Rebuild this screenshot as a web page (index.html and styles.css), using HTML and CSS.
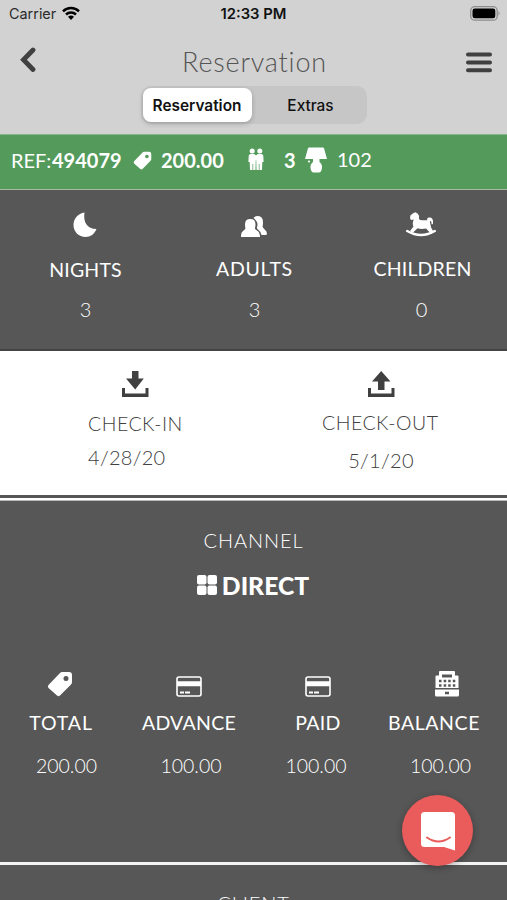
FILE: index.html
```html
<!DOCTYPE html>
<html lang="en">

<head>
    <meta charset="UTF-8">
    <meta name="viewport" content="width=device-width, initial-scale=1.0">
    <title>Reservation</title>
    <link rel="stylesheet" href="styles.css">
</head>

<body>
    <svg width="0" height="0" class="symbols">
        <symbol id="tag" viewBox="0 0 26 26">
            <path fill-rule="evenodd" d="M15 1h7q3 0 3 3v7q0 1.500-1 2.500L13 24.500q-1.500 1.300-3 0L1.500 17q-1.300-1.500 0-3L13 2q1-1 2-1zM19 5a2.500 2.500 0 1 0 0 5a2.500 2.500 0 1 0 0-5z" />
        </symbol>
        <symbol id="card" viewBox="0 0 26 21">
            <rect x="1" y="1" width="24" height="19" rx="2" fill="none" stroke="currentColor" stroke-width="1.600" />
            <path d="M1 5.300h24v5H1zM4 15.500h4v2H4zM9 15.500h5v2H9z" />
        </symbol>
    </svg>

    <header>
        <div class="status-bar">
            <div class="carrier">Carrier
                <svg class="wifi" viewBox="0 0 18 14">
                    <g fill="none" stroke="#000" stroke-width="2.500">
                        <path d="M1 5.300a11.500 11.500 0 0 1 16 0" />
                        <path d="M4 8.500a7.200 7.200 0 0 1 10 0" />
                    </g>
                    <path d="M6 10.700q3-2.500 6 0L9 14z" />
                </svg>
            </div>
            <div class="time">12:33 PM</div>
            <svg class="battery" viewBox="0 0 31 15">
                <rect x=".7" y=".7" width="26.500" height="13.500" rx="4" fill="none" stroke="#8d8d8d" stroke-width="1.300" />
                <rect x="2.500" y="2.500" width="22.800" height="9.800" rx="2.300" />
                <path d="M28.500 5q2.200 2.300 0 4.700z" fill="#8d8d8d" />
            </svg>
        </div>
        <div class="nav">
            <svg class="back" viewBox="0 0 16 26">
                <path d="M13 3L3.500 12.800L13 22.500" fill="none" stroke="#404040" stroke-width="4.800" stroke-linecap="round" />
            </svg>
            <h1>Reservation</h1>
            <svg class="menu" viewBox="0 0 26 21">
                <path d="M2 2.500h22M2 10.500h22M2 18.300h22" stroke="#404040" stroke-width="4" stroke-linecap="round" />
            </svg>
        </div>
        <div class="tabs">
            <div class="tab active">Reservation</div>
            <div class="tab">Extras</div>
        </div>
    </header>

    <div class="ref-bar">
        <span class="ref">REF:</span><b class="ref-number">494079</b>
        <svg class="small-tag"><use href="#tag" /></svg>
        <b class="price">200.00</b>
        <svg class="people" viewBox="0 0 18 23">
            <circle cx="5.200" cy="3" r="2.500" />
            <circle cx="12.800" cy="3" r="2.500" />
            <path d="M3.500 6h3.700L9 7.500L10.800 6h3.700q1.800.3 1.800 2l.3 6h-1.300l-.3 8h-2.500v-6h-.7v6h-2.300l-.3-10h-.4l-.3 10H6.200v-6h-.7v6H3l-.3-8H1.400l.3-6q0-1.700 1.800-2z" />
        </svg>
        <b class="guests">3</b>
        <svg class="lamp" viewBox="0 0 22 26">
            <path d="M4 .5h14q.8 0 1 .8L22 12H0L3 1.300q.2-.8 1-.8zM8 11.500h6.500v3.500q3 2.500 2.500 6q-.8 4.500-3 4.500H8.500q-2.200 0-3-4.500q-.5-3.500 2.500-6z" />
            <circle cx="4" cy="14.500" r="1.100" />
        </svg>
        <span class="room">102</span>
    </div>

    <section class="stay">
        <div class="item nights">
            <svg class="moon" viewBox="0 0 24 25">
                <path d="M11.500 .5C10 10 14 17 23.500 17C21.500 22 17.500 25 12.500 25C6 25 .5 20 .5 13C.5 6.500 5 1.500 11.500 .5z" />
            </svg>
            <div class="label">NIGHTS</div>
            <div class="value">3</div>
        </div>
        <div class="item adults">
            <svg class="group" viewBox="0 0 26 21">
                <path d="M12.500 2q1.500-2 4.500-2q5 .5 5 6q0 3-.5 4.500q.5 1.500 2.200 3q2.300 1.500 2.300 4.500q-.2 1-1.500 1h-4q-.5-3.200-3.500-5.500q-1.500-1-1-2.300q2-5.200-3.500-9.200z" />
                <path d="M9.300 3q5.200 0 5.200 5.300q0 2.500-.7 4q.3 1.200 2.500 2.500q2.700 1.700 2.700 6.200H0q-.2-4.500 2-6q2.400-1.500 2.500-2.700Q4 11 4 8.300q0-5.300 5.300-5.300z" />
            </svg>
            <div class="label">ADULTS</div>
            <div class="value">3</div>
        </div>
        <div class="item children">
            <svg class="horse" viewBox="0 0 30 25">
                <path d="M4 6l.5-2.700L7.500 1l2-.8l2.300 1.600q2 2 1.200 5.200q1 1.500 4 1.200h4.200q-.5-3 2.300-2.700q4 0 3.500 5.500q0 2-1.500 1q.2-3.500-1.300-3q-.7.5.3 3.500l.6 3l2.500 4.500l-2.500 2l-5-5.500q-5 1-8.500-.2L6.500 21L4 19l3.500-4.500Q6 12 7.700 7.500L5 8z" />
                <path d="M1.200 19q13.800 8 27.600 0" fill="none" stroke="currentColor" stroke-width="2.400" stroke-linecap="round" />
            </svg>
            <div class="label">CHILDREN</div>
            <div class="value">0</div>
        </div>
    </section>

    <section class="dates">
        <div class="date check-in">
            <svg viewBox="0 0 28 26">
                <path d="M11 0h6.500v7.500h5.300L14.200 18.500L5 7.500h6zM1 17h3v5.500h20.500V17h3v9H1z" />
            </svg>
            <div class="date-label">CHECK-IN</div>
            <div class="day">4/28/20</div>
        </div>
        <div class="date check-out">
            <svg viewBox="0 0 28 26">
                <path d="M14.200 0L23.500 10.500h-6V19H11v-8.500H5zM1 17h3v5.500h20.500V17h3v9H1z" />
            </svg>
            <div class="date-label">CHECK-OUT</div>
            <div class="day">5/1/20</div>
        </div>
    </section>

    <section class="channel">
        <div class="channel-title">CHANNEL</div>
        <div class="direct">
            <svg viewBox="0 0 20 20">
                <rect width="9.500" height="9.500" rx="2" />
                <rect x="10.500" width="9.500" height="9.500" rx="2" />
                <rect y="10.500" width="9.500" height="9.500" rx="2" />
                <rect x="10.500" y="10.500" width="9.500" height="9.500" rx="2" />
            </svg>
            <b>DIRECT</b>
        </div>
        <div class="payments">
            <div class="payment total">
                <svg><use href="#tag" /></svg>
                <div class="label">TOTAL</div>
                <div class="amount">200.00</div>
            </div>
            <div class="payment advance">
                <svg><use href="#card" /></svg>
                <div class="label">ADVANCE</div>
                <div class="amount">100.00</div>
            </div>
            <div class="payment paid">
                <svg><use href="#card" /></svg>
                <div class="label">PAID</div>
                <div class="amount">100.00</div>
            </div>
            <div class="payment balance">
                <svg viewBox="0 0 24 26">
                    <path fill-rule="evenodd" d="M4 1q0-1 1-1h14q1 0 1 1v3.500h2.500q1 0 1 1V17H.5V5.500q0-1 1-1H4zM7 3.500v3h10v-3zM4 8.800v2.400h2.500V8.800zM8.700 8.800v2.400h2.500V8.800zM13.200 8.800v2.400h2.500V8.800zM17.800 8.800v2.400h2.500V8.800zM4 13.300v2.400h2.500v-2.400zM8.700 13.300v2.400h2.500v-2.400zM13.200 13.300v2.400h2.500v-2.400zM17.800 13.300v2.400h2.500v-2.400zM0 18.500h24v5.500q0 1.500-1.500 1.500h-21Q0 25.500 0 24zM10 20.700v2.500h4v-2.500z" />
                </svg>
                <div class="label">BALANCE</div>
                <div class="amount">100.00</div>
            </div>
        </div>
    </section>

    <section class="client">
        <div class="client-title">CLIENT</div>
    </section>

    <div class="chat">
        <svg viewBox="0 0 36 40">
            <path d="M4.500 1h27q3.500 0 3.500 3.500V39.500L24 36H4.500Q1 36 1 32.500v-28Q1 1 4.500 1z" />
            <path d="M7 26.500q11.500 8 23 0" fill="none" stroke="#ea5c5c" stroke-width="2" stroke-linecap="round" />
        </svg>
    </div>
</body>

</html>
```

FILE: styles.css
```css
* {
    box-sizing: border-box;
}

body {
    margin: 0;
    height: 900px;
    overflow: hidden;
    background: #575757;
    color: #fff;
    font-family: Lato, sans-serif;
}

svg {
    display: block;
    fill: currentColor;
    flex-shrink: 0;
}

.symbols {
    display: none;
}

header {
    height: 134px;
    background: #d2d2d2;
    color: #111;
}

.status-bar {
    height: 27px;
    display: grid;
    grid-template-columns: 1fr 1fr 1fr;
    align-items: center;
    padding: 0 6px 0 9px;
    font-family: Inter, sans-serif;
}

.carrier {
    display: flex;
    gap: 6px;
    align-items: center;
    color: #2b2b2b;
    font-size: 14.4px;
}

.wifi {
    width: 18px;
    height: 14px;
    margin-top: -2px;
    color: #000;
}

.time {
    text-align: center;
    font-weight: 600;
    font-size: 14.8px;
    margin-left: -3px;
}

.battery {
    width: 31px;
    height: 15px;
    justify-self: end;
    margin-top: -1px;
    color: #000;
}

.nav {
    height: 60px;
    display: flex;
    align-items: center;
    justify-content: space-between;
    padding: 9px 15px 0 20px;
}

.back {
    width: 16px;
    height: 26px;
    margin-top: -4px;
}

.nav h1 {
    margin: -1px 0 0 7px;
    font-size: 27px;
    font-weight: 300;
    letter-spacing: 0.8px;
    color: #555;
}

.menu {
    width: 26px;
    height: 21px;
    margin-top: 1px;
}

.tabs {
    display: flex;
    width: 226px;
    height: 38px;
    margin: -1px auto 0;
    padding: 2px;
    border-radius: 10px;
    background: #c6c6c6;
}

.tab {
    flex: 1;
    text-align: center;
    line-height: 35px;
    padding-left: 5px;
    font-family: Inter, sans-serif;
    font-size: 15.4px;
    font-weight: 500;
}

.tab.active {
    flex: 0 0 109px;
    height: 34px;
    padding: 0;
    border-radius: 8px;
    background: #fff;
    font-weight: 600;
    box-shadow: 0 2px 5px rgba(0, 0, 0, 0.2);
}

.ref-bar {
    height: 56px;
    display: flex;
    align-items: center;
    padding: 0 0 4px 11px;
    background: #549a5b;
    border-top: 1px solid #85b68a;
    border-bottom: 1px solid #a5b9a5;
    font-size: 20px;
    line-height: 24px;
}

.ref {
    width: 41px;
}

.ref-number {
    width: 70px;
}

.small-tag {
    width: 19px;
    height: 19px;
    margin: 0 9px 0 11px;
}

.price {
    width: 64px;
}

.people {
    width: 18px;
    height: 23px;
    margin: -2px 19px 0 22px;
}

.guests {
    width: 12px;
    margin-right: 9px;
}

.lamp {
    width: 22px;
    height: 26px;
    margin-right: 10px;
}

.room {
    margin-top: -2px;
}

.stay {
    height: 161px;
    display: grid;
    grid-template-columns: 1fr 1fr 1fr;
    padding-top: 22px;
    border-bottom: 2px solid #444;
}

.item,
.payment {
    display: flex;
    flex-direction: column;
    align-items: center;
}

.moon {
    width: 24px;
    height: 25px;
}

.group {
    width: 26px;
    height: 21px;
    margin: 4px 0 0;
}

.horse {
    width: 30px;
    height: 25px;
    margin-right: 3px;
}

.label {
    font-size: 19.5px;
    line-height: 24px;
    letter-spacing: 0.2px;
    margin-top: 21px;
}

.value {
    font-size: 20px;
    font-weight: 300;
    line-height: 24px;
    margin-top: 15px;
}

.nights .label,
.nights .value,
.adults .label,
.adults .value {
    margin-left: 2px;
}

.adults .label {
    letter-spacing: 0.7px;
}

.adults .label,
.children .label {
    margin-top: 20px;
}

.adults .value,
.children .value {
    margin-top: 16px;
}

.children .value {
    margin-right: 2px;
}

.dates {
    height: 144px;
    display: flex;
    background: #fff;
    color: #404040;
}

.date {
    padding-top: 20px;
}

.date svg {
    width: 28px;
    height: 26px;
    margin: 0 auto;
}

.date-label {
    font-size: 19.5px;
    font-weight: 300;
    line-height: 24px;
    letter-spacing: 0.5px;
    margin-top: 15px;
    white-space: nowrap;
}

.day {
    font-size: 20px;
    font-weight: 300;
    line-height: 24px;
    letter-spacing: 0.3px;
    margin-top: 9px;
}

.check-in {
    width: 94px;
    margin-left: 88px;
}

.check-out {
    width: 118px;
    margin-left: 140px;
}

.check-out .date-label {
    margin-top: 14px;
}

.check-out .day {
    margin-top: 13px;
    text-align: center;
}

.channel {
    height: 367px;
    border-top: 3px solid #555;
    box-shadow: inset 0 2px #fff, inset 0 3px #b9bebb;
    padding-top: 30px;
    text-align: center;
}

.channel-title,
.client-title {
    font-size: 20px;
    font-weight: 300;
    line-height: 24px;
    letter-spacing: 0.9px;
}

.direct {
    display: flex;
    align-items: center;
    justify-content: center;
    gap: 5px;
    margin: 18px 1px 0 0;
    height: 30px;
    font-size: 24.7px;
}

.direct b {
    font-weight: 900;
}

.direct svg {
    width: 20px;
    height: 20px;
}

.payments {
    display: grid;
    grid-template-columns: 120px 138px 120px 112px;
    margin-top: 71px;
}

.payment svg {
    width: 26px;
    height: 26px;
}

.payment .label {
    margin-top: 14px;
    letter-spacing: 0.3px;
}

.amount {
    font-size: 19.5px;
    font-weight: 300;
    line-height: 24px;
    margin-top: 19px;
}

.payment.total .label {
    letter-spacing: 0.9px;
    margin-left: 2px;
}

.total .amount {
    margin-left: 13px;
}

.advance .amount {
    margin-left: 4px;
}

.paid .amount {
    margin-right: 4px;
}

.advance svg,
.paid svg {
    height: 21px;
    margin: 5px 0 0;
}

.payment.balance .label {
    letter-spacing: 0.6px;
}

.balance svg {
    width: 24px;
    margin-left: 26px;
}

.balance .amount {
    margin-left: 13px;
}

.client {
    border-top: 3px solid #f4f4f4;
    padding-top: 26px;
    text-align: center;
}

/* floats above the page */
.chat {
    position: absolute;
    left: 402px;
    top: 795px;
    width: 71px;
    height: 71px;
    display: flex;
    align-items: center;
    justify-content: center;
    border-radius: 50%;
    background: #ea5c5c;
    box-shadow: 0 2px 7px rgba(0, 0, 0, 0.3);
}

.chat svg {
    width: 36px;
    height: 40px;
}
```
